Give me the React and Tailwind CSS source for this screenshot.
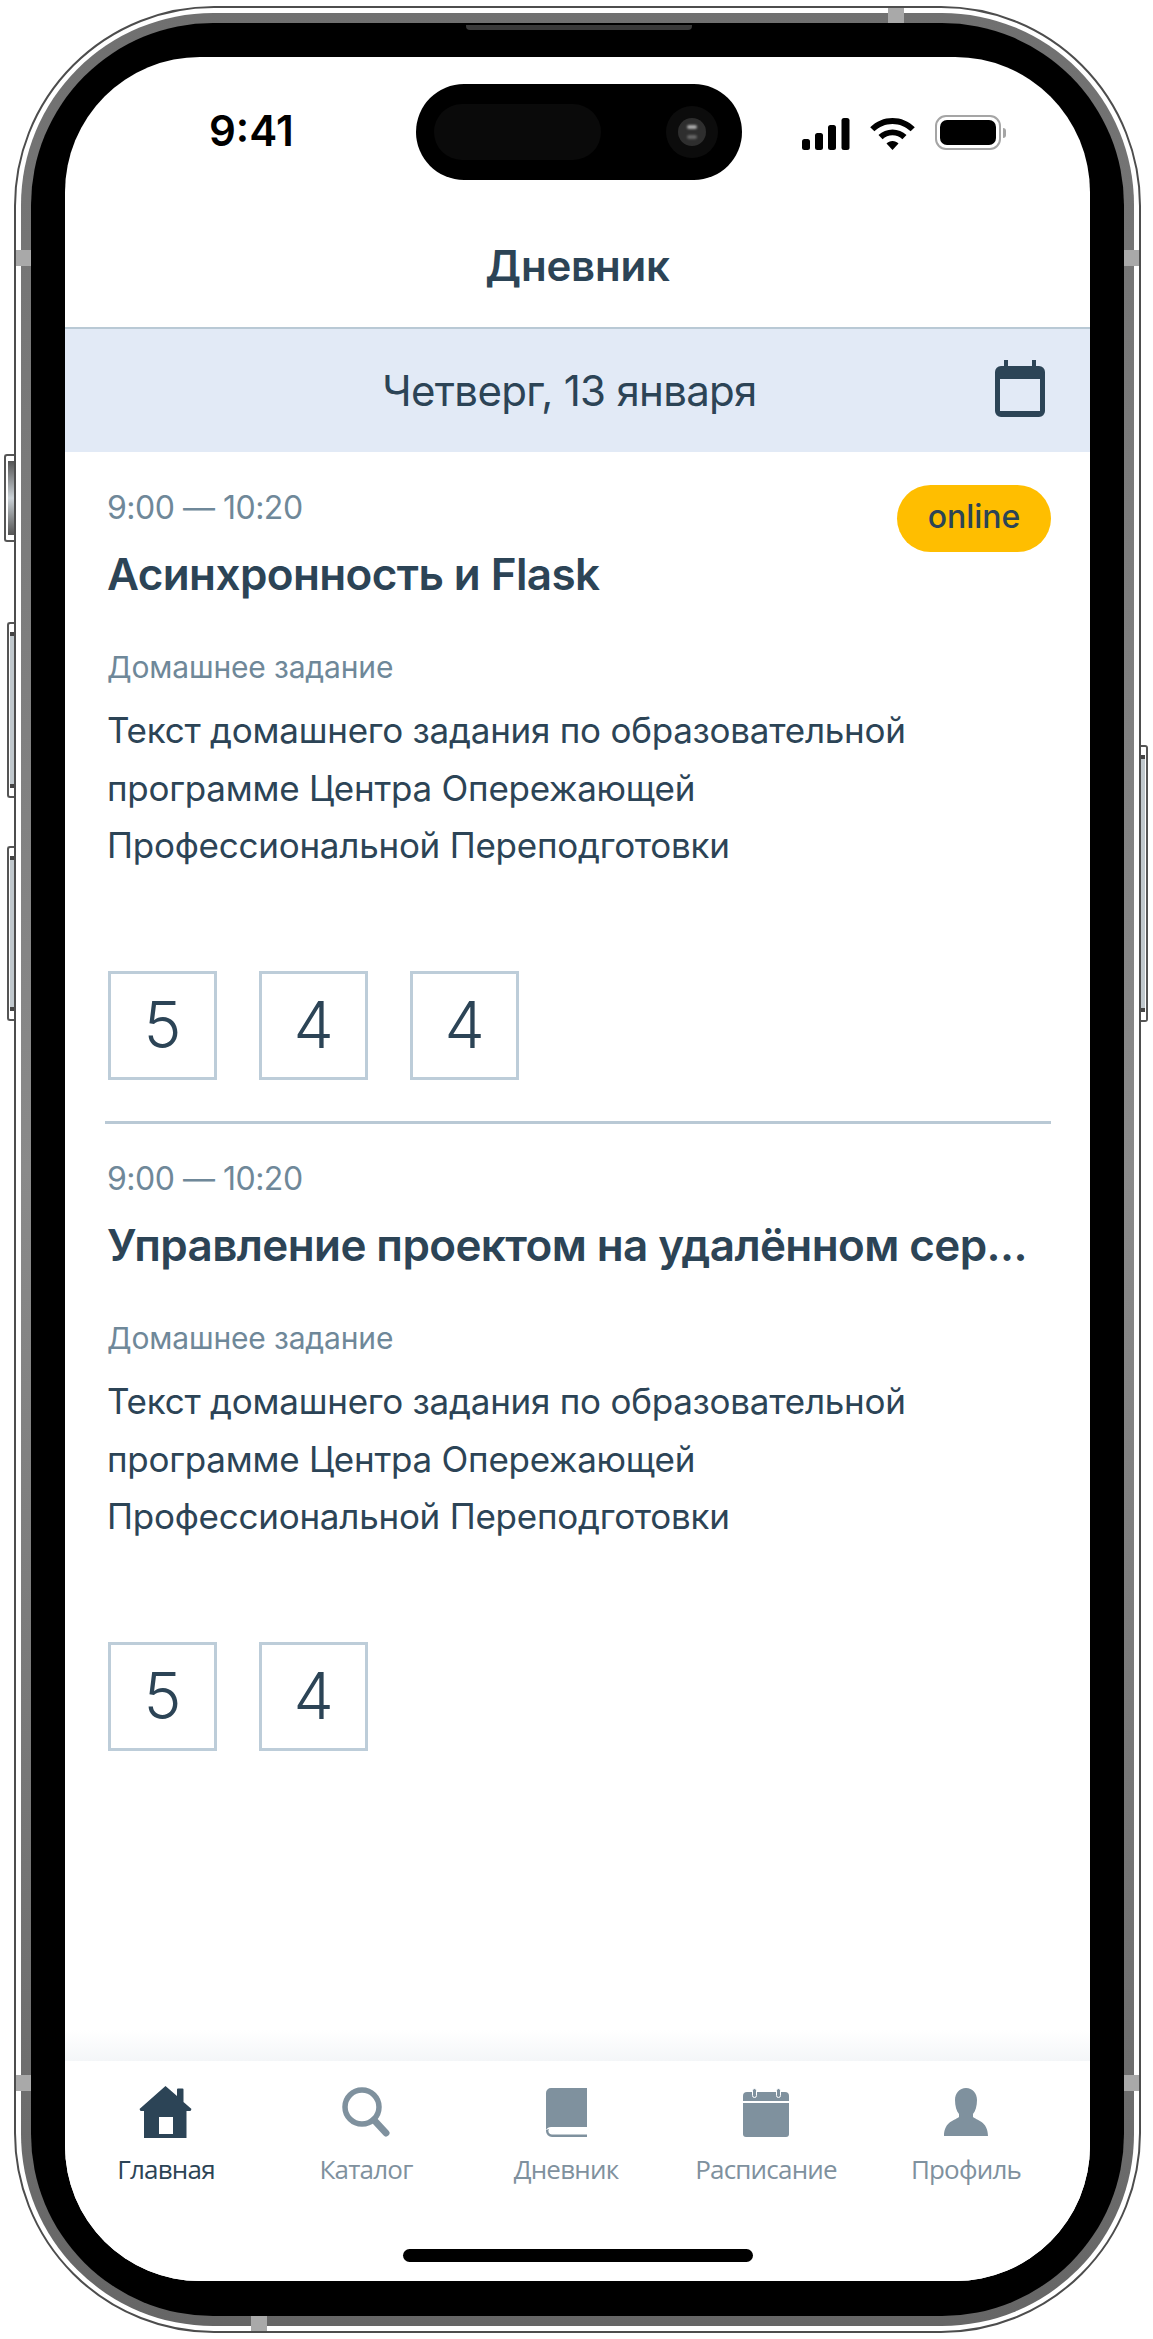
const ink = '#2c4456';

const lessons = [
  { title: 'Асинхронность и Flask', online: true, grades: [5, 4, 4] },
  { title: 'Управление проектом на удалённом сер...', online: false, grades: [5, 4] },
];

const tabs = [
  { label: 'Главная', Icon: HomeIcon, active: true },
  { label: 'Каталог', Icon: SearchIcon },
  { label: 'Дневник', Icon: BookIcon },
  { label: 'Расписание', Icon: ScheduleIcon },
  { label: 'Профиль', Icon: PersonIcon },
];

export default function App() {
  return (
    <div className="relative h-[2339px] w-[1153px] overflow-hidden bg-white pl-[14px] pt-[6px] font-['Inter',sans-serif]">
      <SideButtons />
      <div className="relative h-[2327px] w-[1127px] rounded-[200px] border-2 border-[#4d4d4d] bg-white p-[5px]">
        <FrameBands />
        <div className="h-full rounded-[192px] bg-gradient-to-b from-[#707070] via-[#8a8a8a] to-[#666666] p-[10px]">
          <div className="h-full rounded-[182px] bg-black pb-[35px] pl-[34px] pr-[34px] pt-[34px]">
            <Screen />
          </div>
        </div>
      </div>
    </div>
  );
}

function SideButtons() {
  return (
    <>
      <div className="absolute left-[4px] top-[454px] h-[88px] w-[11px] rounded-l-[3px] border-2 border-r-0 border-[#555] bg-white py-[5px] pl-[2px]">
        <div className="h-full bg-gradient-to-b from-[#555] via-[#ccd3d8] to-[#555]" />
      </div>
      <div className="absolute left-[7px] top-[622px] h-[176px] w-[8px] rounded-l-[3px] border-2 border-r-0 border-[#555] bg-white py-[8px] pl-[1px]">
        <div className="h-full border-y-[4px] border-[#444] bg-[#c0c8cd]" />
      </div>
      <div className="absolute left-[7px] top-[846px] h-[175px] w-[8px] rounded-l-[3px] border-2 border-r-0 border-[#555] bg-white py-[8px] pl-[1px]">
        <div className="h-full border-y-[4px] border-[#444] bg-[#c0c8cd]" />
      </div>
      <div className="absolute left-[1140px] top-[745px] h-[277px] w-[8px] rounded-r-[3px] border-2 border-l-0 border-[#555] bg-white py-[8px] pr-[1px]">
        <div className="h-full border-y-[4px] border-[#444] bg-[#c0c8cd]" />
      </div>
    </>
  );
}

function FrameBands() {
  return (
    <>
      <div className="absolute left-[450px] top-[17px] z-10 h-[5px] w-[226px] rounded-b-[4px] bg-[#3a3a3a]" />
      <div className="absolute left-[872px] top-0 h-[15px] w-[16px] bg-[#a9a9a9]" />
      <div className="absolute left-[235px] bottom-0 h-[15px] w-[16px] bg-[#a9a9a9]" />
      <div className="absolute left-0 top-[242px] h-[16px] w-[15px] bg-[#a9a9a9]" />
      <div className="absolute right-0 top-[242px] h-[16px] w-[15px] bg-[#a9a9a9]" />
      <div className="absolute left-0 bottom-[240px] h-[16px] w-[15px] bg-[#a9a9a9]" />
      <div className="absolute right-0 bottom-[240px] h-[16px] w-[15px] bg-[#a9a9a9]" />
    </>
  );
}

function Screen() {
  return (
    <div className="relative flex h-full flex-col overflow-hidden rounded-[135px] bg-white text-[#2c4456]">
      <StatusBar />
      <h1 className="flex h-[149px] shrink-0 items-center justify-center border-b-[2px] border-[#b9c9d5] pt-[25px] text-[42px] font-semibold leading-none tracking-[-0.2px]">
        Дневник
      </h1>
      <div className="relative flex h-[123px] shrink-0 items-center justify-center bg-[#e2eaf6] pr-[16px] text-[42px] leading-none tracking-[-0.7px]">
        Четверг, 13 января
        <CalendarIcon />
      </div>
      <div className="flex-1 pl-[40px] pr-[39px]">
        {lessons.map((lesson, index) => (
          <Lesson key={lesson.title} lesson={lesson} last={index === lessons.length - 1} />
        ))}
      </div>
      <TabBar />
    </div>
  );
}

function StatusBar() {
  return (
    <div className="flex h-[123px] shrink-0 items-start pt-[27px]">
      <div className="w-[351px] pl-[144px] pt-[26px] text-[42px] font-semibold leading-none text-black">9:41</div>
      <div className="flex h-[96px] w-[326px] items-center justify-between rounded-[48px] bg-black pl-[18px] pr-[24px]">
        <div className="h-[56px] w-[167px] rounded-[28px] bg-[#0a0a0a]" />
        <div className="flex h-[52px] w-[52px] items-center justify-center rounded-full bg-[#0c0c0c]">
          <div className="flex h-[28px] w-[28px] flex-col items-center justify-center gap-[6px] rounded-full bg-[#2e2e2e]">
            <div className="h-[4px] w-[10px] rounded-full bg-[#aaa] blur-[1px]" />
            <div className="h-[4px] w-[10px] rounded-full bg-[#666] blur-[1px]" />
          </div>
        </div>
      </div>
      <div className="flex items-end gap-[20px] pl-[60px] pt-[31px]">
        <svg width="48" height="32" viewBox="0 0 48 32" fill="#000">
          <rect x="0" y="21" width="8" height="11" rx="2.5" />
          <rect x="13" y="15" width="8" height="17" rx="2.5" />
          <rect x="26" y="7" width="8" height="25" rx="2.5" />
          <rect x="39.500" y="0" width="8" height="32" rx="2.5" />
        </svg>
        <svg width="45" height="32" viewBox="0 0 45 32" fill="#000">
          <path d="M22.500 0C31 0 38.800 3.300 44.800 9.300L40.600 13.300C35.800 8.600 29.400 5.900 22.500 5.900S9.200 8.600 4.400 13.300L.2 9.300C6.200 3.300 14 0 22.500 0Z" />
          <path d="M22.500 11.500C27.900 11.500 32.800 13.600 36.500 17.100L32.400 21.200C29.800 18.800 26.300 17.300 22.500 17.300S15.200 18.800 12.600 21.200L8.500 17.100C12.200 13.600 17.100 11.500 22.500 11.500Z" />
          <path d="M22.500 23C24.900 23 27 24 28.500 25.500L22.500 32 16.500 25.500C18 24 20.100 23 22.500 23Z" />
        </svg>
        <div className="flex items-center gap-[2px]">
          <div className="h-[35px] w-[66px] rounded-[11px] border-[2px] border-[#a5a5a5] p-[3px]">
            <div className="h-full rounded-[7px] bg-black" />
          </div>
          <div className="h-[10px] w-[3px] rounded-r-[3px] bg-[#a5a5a5]" />
        </div>
      </div>
    </div>
  );
}

function Lesson({ lesson, last }) {
  return (
    <section className={last ? 'pl-[2px] pt-[36px]' : 'h-[672px] border-b-[3px] border-[#b9c9d5] pl-[2px] pt-[37px]'}>
      <div className="flex justify-between">
        <div className="min-w-0 flex-1">
          <p className="text-[32px] leading-[38px] tracking-[-0.5px] text-[#6f8899]">9:00 — 10:20</p>
        </div>
        {lesson.online && (
          <div className="-mt-[4px] mb-[-40px] flex h-[67px] w-[154px] items-center justify-center rounded-[34px] bg-[#ffbe00] pb-[4px] text-[32px] font-medium">
            online
          </div>
        )}
      </div>
      <h2 className="mt-[20px] whitespace-nowrap text-[44px] font-semibold leading-[54px] tracking-[-0.6px]">
        {lesson.title}
      </h2>
      <p className="mt-[48px] text-[30px] leading-[36px] tracking-[-0.15px] text-[#6f8899]">Домашнее задание</p>
      <p className="mt-[17px] text-[35px] leading-[57.5px] tracking-[-0.25px]">
        Текст домашнего задания по образовательной
        <br />
        программе Центра Опережающей
        <br />
        Профессиональной Переподготовки
      </p>
      <div className="ml-[1px] mt-[96px] flex gap-[42px]">
        {lesson.grades.map((grade, index) => (
          <div
            key={index}
            className="flex h-[109px] w-[109px] items-center justify-center border-[3px] border-[#bdcdd9] text-[64px] font-[350] leading-none"
          >
            {grade}
          </div>
        ))}
      </div>
    </section>
  );
}

function TabBar() {
  return (
    <>
      <div className="h-[31px] shrink-0 bg-gradient-to-b from-white to-[#f4f6f8]" />
      <nav className="h-[220px] shrink-0 bg-white">
        <div className="flex pl-px pt-[23px]">
          {tabs.map(({ label, Icon, active }) => (
            <div key={label} className={`flex w-[200px] flex-col items-center ${active ? 'text-[#2c4456]' : 'text-[#7f919e]'}`}>
              <div className="flex h-[56px] items-center justify-center">
                <Icon />
              </div>
              <span className="mt-[13px] font-['Open_Sans',sans-serif] text-[26px] leading-[32px] tracking-[-0.8px]">{label}</span>
            </div>
          ))}
        </div>
        <div className="mx-auto mt-[64px] h-[13px] w-[350px] rounded-full bg-black" />
      </nav>
    </>
  );
}

function CalendarIcon() {
  return (
    <svg className="absolute right-[45px] top-[31px]" width="50" height="57" viewBox="0 0 50 57" fill="none">
      <path d="M9 0h4v6h24V0h4v6h3a6 6 0 0 1 6 6v39a6 6 0 0 1-6 6H6a6 6 0 0 1-6-6V12a6 6 0 0 1 6-6h3V0Z" fill={ink} />
      <rect x="5" y="19" width="40" height="32" fill="#e2eaf6" />
    </svg>
  );
}

function HomeIcon() {
  return (
    <svg width="54" height="54" viewBox="0 0 54 54" fill="currentColor">
      <path
        d="M26.500 1 38 11V4.500a1 1 0 0 1 1-1h4.500a1 1 0 0 1 1 1V17l8 7-1 2H47.500v27H5V26H1.500l-1-2L26.500 1ZM20 32v17h14V32H20Z"
        fillRule="evenodd"
      />
    </svg>
  );
}

function SearchIcon() {
  return (
    <svg width="48" height="50" viewBox="0 0 48 50" fill="none" stroke="currentColor">
      <circle cx="20" cy="20" r="17" strokeWidth="5.500" />
      <path d="M32 33 44 46" strokeWidth="7" strokeLinecap="round" />
    </svg>
  );
}

function BookIcon() {
  return (
    <svg width="41" height="49" viewBox="0 0 41 49" fill="currentColor">
      <path d="M5 0h36v39H6a6 6 0 0 0-6 3V5a5 5 0 0 1 5-5Z" />
      <path d="M0 42v1a6 6 0 0 0 6 6h35v-2.500H6a3.500 3.500 0 0 1-3-5.500Z" />
    </svg>
  );
}

function ScheduleIcon() {
  return (
    <svg width="46" height="49" viewBox="0 0 46 49" fill="currentColor">
      <path d="M4 4h38a4 4 0 0 1 4 4v5H0V8a4 4 0 0 1 4-4Z" />
      <path d="M0 15h46v31a3 3 0 0 1-3 3H3a3 3 0 0 1-3-3V15Z" />
      <rect x="9.500" y="0.500" width="4" height="9" rx="2" stroke="#fff" />
      <rect x="33.500" y="0.500" width="4" height="9" rx="2" stroke="#fff" />
    </svg>
  );
}

function PersonIcon() {
  return (
    <svg width="44" height="48" viewBox="0 0 44 48" fill="currentColor">
      <path d="M22 0c6.500 0 11 5 11 12 0 6-1.500 11-4 14v3c3 3 15 4 15 19H0c0-15 12-16 15-19v-3c-2.500-3-4-8-4-14C11 5 15.500 0 22 0Z" />
    </svg>
  );
}
